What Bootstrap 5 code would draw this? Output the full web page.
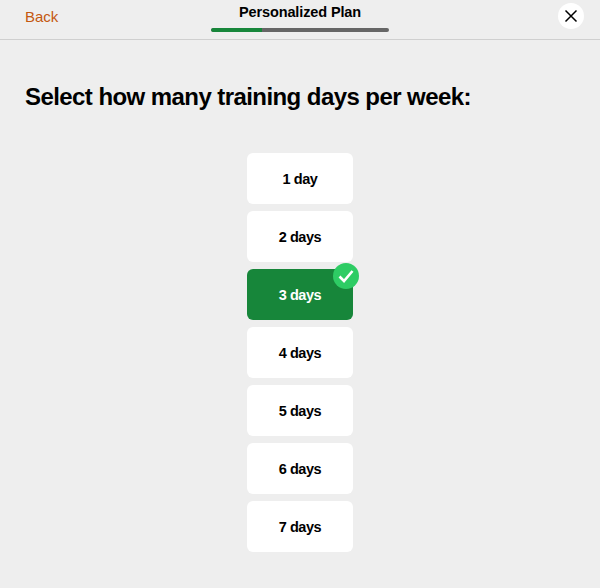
<!DOCTYPE html>
<html lang="en">
  <head>
    <meta charset="UTF-8" />
    <title>Personalized Plan</title>
    <link href="https://cdn.jsdelivr.net/npm/bootstrap@5.3.0/dist/css/bootstrap.min.css" rel="stylesheet" />
    <style>
      html, body {
        height: 100%;
      }
      body {
        background: #eeeeee;
        font-family: "Liberation Sans", Arial, sans-serif;
        color: #000;
      }
      .top-bar {
        height: 40px;
        border-bottom: 1px solid #cfcfcf;
        padding: 0 16px 0 25px;
      }
      .top-side {
        width: 150px;
      }
      .top-side-left {
        width: 141px;
      }
      .back-link {
        color: #c4580f;
        font-size: 15px;
        text-decoration: none;
        line-height: 34px;
      }
      .plan-title {
        font-size: 14.5px;
        font-weight: 700;
        line-height: 17px;
        letter-spacing: -0.12px;
        margin-top: 4px;
      }
      .plan-progress {
        width: 178px;
        height: 4px;
        margin-top: 7px;
        border-radius: 2px;
        background: #666;
      }
      .plan-progress .progress-bar {
        background: #17863a;
        border-radius: 2px 0 0 2px;
      }
      .close-round {
        width: 26px;
        height: 26px;
        margin-top: 3px;
        border: 0;
        background: #fff;
      }
      .page-heading {
        font-size: 24px;
        font-weight: 700;
        line-height: 30px;
        letter-spacing: -0.57px;
        margin: 42px 25px 41px;
      }
      .day-list {
        width: 106px;
        gap: 7px;
      }
      .day-btn {
        height: 51px;
        border: 0;
        padding-top: 4px;
        border-radius: 6px;
        background: #fff;
        color: #000;
        font-size: 14.5px;
        font-weight: 700;
        letter-spacing: -0.45px;
      }
      .day-btn.selected {
        background: #17863a;
        color: #fff;
      }
      .day-check {
        top: -6px;
        right: -6px;
        width: 26px;
        height: 26px;
        background: #2ecc64;
      }
    </style>
  </head>
  <body>
    <div class="top-bar d-flex justify-content-between align-items-start">
      <div class="top-side-left">
        <a href="#" class="back-link">Back</a>
      </div>
      <div class="d-flex flex-column align-items-center">
        <div class="plan-title">Personalized Plan</div>
        <div class="progress plan-progress">
          <div class="progress-bar" style="width: 28.5%"></div>
        </div>
      </div>
      <div class="top-side d-flex justify-content-end">
        <button type="button" class="close-round rounded-circle d-flex align-items-center justify-content-center p-0" aria-label="Close">
          <svg width="14" height="14" viewBox="0 0 14 14"><path d="M1.5 1.5l11 11M12.5 1.5l-11 11" stroke="#000" stroke-width="1.5" fill="none" /></svg>
        </button>
      </div>
    </div>

    <h1 class="page-heading">Select how many training days per week:</h1>

    <div class="day-list d-flex flex-column mx-auto">
      <button type="button" class="day-btn">1 day</button>
      <button type="button" class="day-btn">2 days</button>
      <button type="button" class="day-btn selected position-relative">
        3 days
        <span class="day-check position-absolute rounded-circle d-flex align-items-center justify-content-center">
          <svg width="16" height="14" viewBox="0 0 16 14"><path d="M1.5 7.5l4.5 4.5L14.5 2" stroke="#fff" stroke-width="2.6" fill="none" /></svg>
        </span>
      </button>
      <button type="button" class="day-btn">4 days</button>
      <button type="button" class="day-btn">5 days</button>
      <button type="button" class="day-btn">6 days</button>
      <button type="button" class="day-btn">7 days</button>
    </div>

    <script src="https://cdn.jsdelivr.net/npm/bootstrap@5.3.0/dist/js/bootstrap.bundle.min.js"></script>
  </body>
</html>
